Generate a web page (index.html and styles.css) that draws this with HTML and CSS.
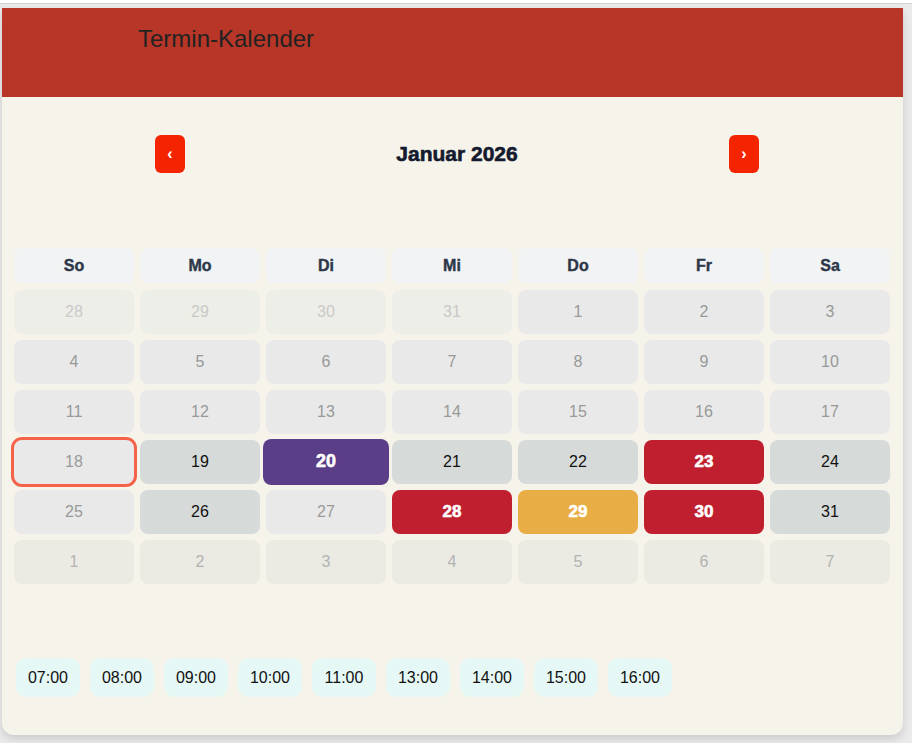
FILE: index.html
```html
<!DOCTYPE html>
<html lang="de">

<head>
   <meta charset="UTF-8">
   <meta name="viewport" content="width=device-width, initial-scale=1.0">
   <title>Termin-Kalender</title>
   <link rel="stylesheet" href="styles.css">
</head>

<body>
   <div class="topline"></div>

   <div class="card">
      <div class="card-header">
         <h2>Termin-Kalender</h2>
      </div>

      <div class="card-body">
         <div class="nav">
            <button class="nav-btn" id="prev">&#8249;</button>
            <span class="month">Januar 2026</span>
            <button class="nav-btn" id="next">&#8250;</button>
         </div>

         <div class="calendar">
            <div class="weekday">So</div>
            <div class="weekday">Mo</div>
            <div class="weekday">Di</div>
            <div class="weekday">Mi</div>
            <div class="weekday">Do</div>
            <div class="weekday">Fr</div>
            <div class="weekday">Sa</div>

            <div class="day prev-month">28</div>
            <div class="day prev-month">29</div>
            <div class="day prev-month">30</div>
            <div class="day prev-month">31</div>
            <div class="day past">1</div>
            <div class="day past">2</div>
            <div class="day past">3</div>

            <div class="day past">4</div>
            <div class="day past">5</div>
            <div class="day past">6</div>
            <div class="day past">7</div>
            <div class="day past">8</div>
            <div class="day past">9</div>
            <div class="day past">10</div>

            <div class="day past">11</div>
            <div class="day past">12</div>
            <div class="day past">13</div>
            <div class="day past">14</div>
            <div class="day past">15</div>
            <div class="day past">16</div>
            <div class="day past">17</div>

            <div class="day past today">18</div>
            <div class="day free">19</div>
            <div class="day selected">20</div>
            <div class="day free">21</div>
            <div class="day free">22</div>
            <div class="day booked">23</div>
            <div class="day free">24</div>

            <div class="day past">25</div>
            <div class="day free">26</div>
            <div class="day past">27</div>
            <div class="day booked">28</div>
            <div class="day partly">29</div>
            <div class="day booked">30</div>
            <div class="day free">31</div>

            <div class="day next-month">1</div>
            <div class="day next-month">2</div>
            <div class="day next-month">3</div>
            <div class="day next-month">4</div>
            <div class="day next-month">5</div>
            <div class="day next-month">6</div>
            <div class="day next-month">7</div>
         </div>

         <div class="slots">
            <div class="slot">07:00</div>
            <div class="slot">08:00</div>
            <div class="slot">09:00</div>
            <div class="slot">10:00</div>
            <div class="slot">11:00</div>
            <div class="slot">13:00</div>
            <div class="slot">14:00</div>
            <div class="slot">15:00</div>
            <div class="slot">16:00</div>
         </div>
      </div>
   </div>
</body>

</html>
```

FILE: styles.css
```css
* {
   margin: 0;
   padding: 0;
   box-sizing: border-box;
   font-family: 'Liberation Sans', Arial, sans-serif;
}

body {
   background-color: #ebebeb;
   height: 743px;
   overflow: hidden;
}

.topline {
   height: 4px;
   background-color: #fff;
   border-bottom: 1px solid #d2d2d2;
}

.card {
   width: 901px;
   margin: 4px 0 0 2px;
   background-color: #f6f3ea;
   border-radius: 0 0 12px 12px;
   box-shadow: 0 4px 10px rgba(0, 0, 0, 0.14);
   overflow: hidden;
}

.card-header {
   background-color: #b83627;
   height: 89px;
   padding: 17px 0 0 136px;
}

.card-header h2 {
   font-size: 24px;
   font-weight: normal;
   color: #222;
}

.card-body {
   padding: 38px 13px 38px 12px;
}

.nav {
   display: flex;
   justify-content: space-between;
   align-items: center;
   width: 604px;
   margin-left: 141px;
}

.nav-btn {
   width: 30px;
   height: 38px;
   border: none;
   border-radius: 6px;
   background-color: #f52400;
   color: #fff;
   font-size: 16px;
   font-weight: bold;
   cursor: pointer;
}

.month {
   font-size: 21px;
   font-weight: bold;
   color: #141a2e;
   -webkit-text-stroke: 0.6px #141a2e;
}

.calendar {
   display: grid;
   grid-template-columns: repeat(7, 1fr);
   grid-template-rows: 36px repeat(6, 44px);
   column-gap: 6px;
   row-gap: 6px;
   margin-top: 75px;
}

.weekday {
   height: 35px;
   background-color: #f1f3f5;
   border-radius: 8px;
   display: flex;
   justify-content: center;
   align-items: center;
   font-size: 16px;
   font-weight: bold;
   color: #2d3748;
   -webkit-text-stroke: 0.4px #2d3748;
}

.day {
   border-radius: 8px;
   display: flex;
   justify-content: center;
   align-items: center;
   font-size: 16px;
   color: #111;
}

.prev-month {
   background-color: #eeeee8;
   color: #c9c9c9;
}

.next-month {
   background-color: #ebeae3;
   color: #b3b3b3;
}

.past {
   background-color: #e8e9e8;
   color: #999;
}

.free {
   background-color: #d6dad9;
   color: #111;
}

.today {
   outline: 3px solid #f4624a;
   border-radius: 8px;
}

.selected,
.booked,
.partly {
   color: #fff;
   font-size: 17px;
   font-weight: bold;
   -webkit-text-stroke: 0.6px #fff;
}

.selected {
   background-color: #5a3e88;
   transform: scale(1.05);
}

.booked {
   background-color: #c01f30;
}

.partly {
   background-color: #e9ad45;
}

.slots {
   display: flex;
   gap: 10px;
   margin-top: 74px;
   padding-left: 2px;
}

.slot {
   width: 64px;
   height: 39px;
   background-color: #e6f8f5;
   border-radius: 10px;
   display: flex;
   justify-content: center;
   align-items: center;
   font-size: 16px;
   color: #111;
}
```
